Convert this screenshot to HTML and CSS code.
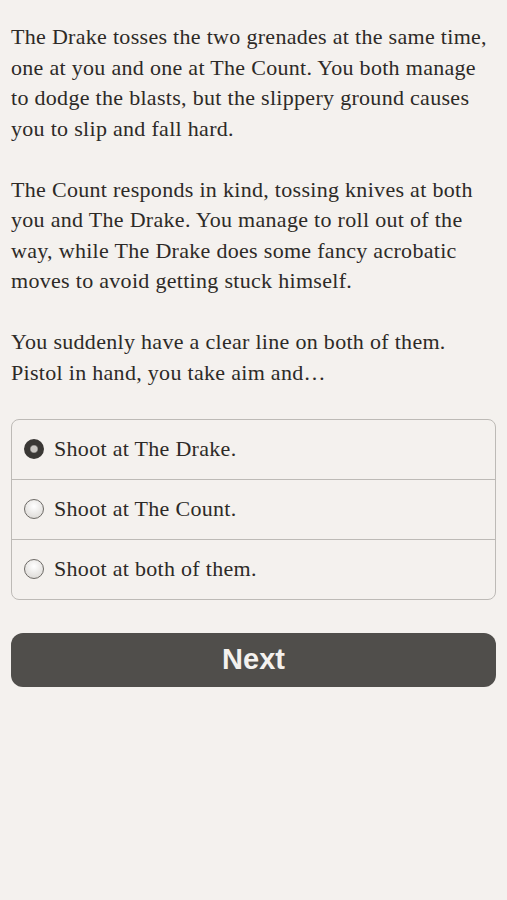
FILE: index.html
```html
<!DOCTYPE html>
<html lang="en">
<head>
  <meta charset="UTF-8" />
  <meta name="viewport" content="width=device-width, initial-scale=1.0" />
  <title>Story</title>
  <link rel="stylesheet" href="styles.css">
</head>
<body>
  <div class="story">
    <p>The Drake tosses the two grenades at the same time, one at you and one at The Count. You both manage to dodge the blasts, but the slippery ground causes you to slip and fall hard.</p>
    <p>The Count responds in kind, tossing knives at both you and The Drake. You manage to roll out of the way, while The Drake does some fancy acrobatic moves to avoid getting stuck himself.</p>
    <p>You suddenly have a clear line on both of them. Pistol in hand, you take aim and&hellip;</p>
  </div>

  <div class="choices">
    <label class="choice">
      <input type="radio" name="choice" checked>
      <span class="radio"></span>
      <span>Shoot at The Drake.</span>
    </label>
    <label class="choice">
      <input type="radio" name="choice">
      <span class="radio"></span>
      <span>Shoot at The Count.</span>
    </label>
    <label class="choice">
      <input type="radio" name="choice">
      <span class="radio"></span>
      <span>Shoot at both of them.</span>
    </label>
  </div>

  <button class="next">Next</button>
</body>
</html>
```

FILE: styles.css
```css
body {
  background-color: #f4f1ee;
  color: #2d2a27;
  font-family: 'Liberation Serif', 'Times New Roman', serif;
  margin: 0;
  padding: 22px 11px;
}
.story p {
  font-size: 22px;
  line-height: 30.5px;
  margin: 0 0 30.5px 0;
  letter-spacing: 0.3px;
}
.choices {
  margin-top: 0;
  border: 1.5px solid #bdbab6;
  border-radius: 8px;
  overflow: hidden;
}
.choice {
  display: flex;
  align-items: center;
  gap: 10px;
  height: 59px;
  padding: 0 12px;
  font-size: 22px;
  letter-spacing: 0.3px;
  border-top: 1.5px solid #bdbab6;
}
.choice:first-child {
  border-top: none;
}
.choice input {
  display: none;
}
.radio {
  width: 20px;
  height: 20px;
  border-radius: 50%;
  border: 1.5px solid #6d6a66;
  background: radial-gradient(circle at 50% 35%, #ffffff, #d6d3cf);
  box-sizing: border-box;
}
.choice input:checked + .radio {
  border: 2px solid #3a3835;
  background: radial-gradient(circle, #c9c6c2 0, #c9c6c2 3px, #3a3835 4.5px);
}
.next {
  display: block;
  width: 100%;
  height: 54px;
  margin-top: 33px;
  border: none;
  border-radius: 12px;
  background-color: #504e4b;
  color: #f4f1ee;
  font-family: 'Liberation Sans', Arial, sans-serif;
  font-weight: bold;
  font-size: 29px;
}
```
